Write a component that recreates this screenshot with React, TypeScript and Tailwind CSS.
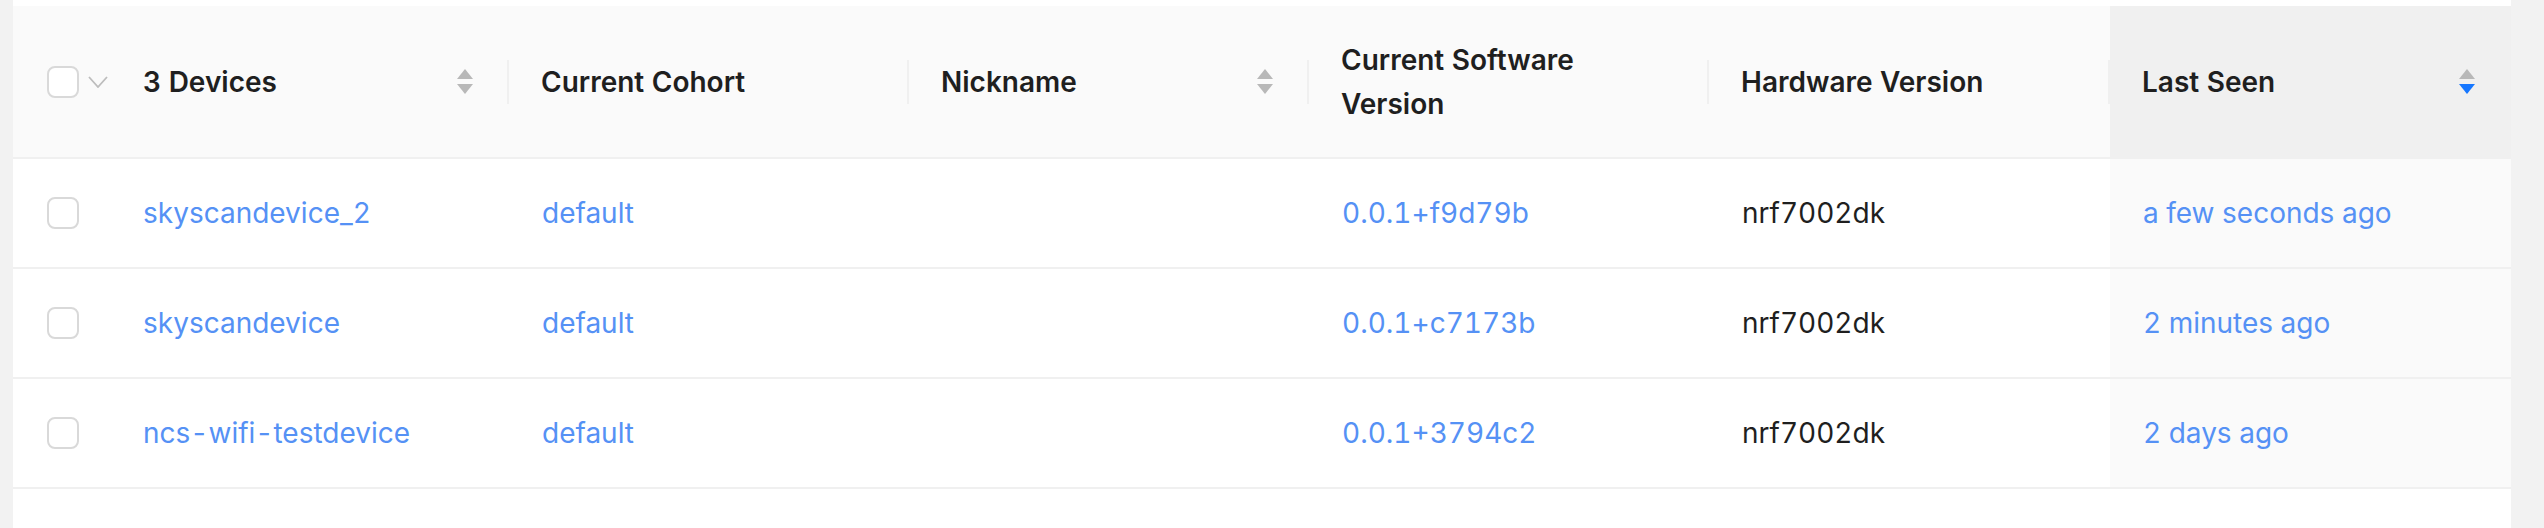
import React from "react";

type Device = {
  name: string;
  cohort: string;
  nickname: string;
  software: string;
  hardware: string;
  lastSeen: string;
};

const devices: Device[] = [
  {
    name: "skyscandevice_2",
    cohort: "default",
    nickname: "",
    software: "0.0.1+f9d79b",
    hardware: "nrf7002dk",
    lastSeen: "a few seconds ago",
  },
  {
    name: "skyscandevice",
    cohort: "default",
    nickname: "",
    software: "0.0.1+c7173b",
    hardware: "nrf7002dk",
    lastSeen: "2 minutes ago",
  },
  {
    name: "ncs-wifi-testdevice",
    cohort: "default",
    nickname: "",
    software: "0.0.1+3794c2",
    hardware: "nrf7002dk",
    lastSeen: "2 days ago",
  },
];

const cols = "grid grid-cols-[98px_398px_400px_400px_400px_401px_401px]";

const Checkbox = () => (
  <span className="block w-[32px] h-[32px] rounded-[8px] border-2 border-[#d9d9d9] bg-white" />
);

const Sorter = ({ active }: { active?: boolean }) => (
  <svg width="16" height="26" viewBox="0 0 16 26" className="shrink-0">
    <polygon points="8,0 16,10 0,10" fill="#b8b8b8" />
    <polygon points="0,15 16,15 8,25" fill={active ? "#1677ff" : "#b8b8b8"} />
  </svg>
);

const Divider = () => <span className="w-[2px] h-[44px] bg-[#f0f0f0] shrink-0" />;

const HeadCell = ({
  children,
  sorter,
  active,
  divider = true,
  sorted,
}: {
  children: React.ReactNode;
  sorter?: boolean;
  active?: boolean;
  divider?: boolean;
  sorted?: boolean;
}) => (
  <div className={`flex items-center pl-[32px] ${sorted ? "bg-[#f0f0f0]" : ""}`}>
    <div
      className={`flex-1 flex items-center justify-between ${divider ? "pr-[34px]" : "pr-[36px]"}`}
    >
      <span>{children}</span>
      {sorter && <Sorter active={active} />}
    </div>
    {divider && <Divider />}
  </div>
);

export default function App() {
  return (
    <div
      className="flex h-[528px] w-[2544px] bg-white text-[28px] leading-[44px] text-[#1f1f1f] tabular-nums"
      style={{ fontFamily: "Inter, 'Liberation Sans', sans-serif" }}
    >
      <div className="w-[13px] bg-[#f2f2f2]" />
      <div className="flex-1 pt-[6px]">
        {/* Header */}
        <div className={`${cols} h-[153px] bg-[#fafafa] border-b-2 border-[#f0f0f0] font-semibold`}>
          <div className="flex items-center pl-[34px] gap-[9px]">
            <Checkbox />
            <svg width="20" height="12" viewBox="0 0 20 12" fill="none">
              <polyline points="1,1 10,11 19,1" stroke="#bdbdbd" strokeWidth="1.8" />
            </svg>
          </div>
          <HeadCell sorter>3 Devices</HeadCell>
          <HeadCell>Current Cohort</HeadCell>
          <HeadCell sorter>Nickname</HeadCell>
          <HeadCell>
            Current Software
            <br />
            Version
          </HeadCell>
          <HeadCell>Hardware Version</HeadCell>
          <HeadCell sorter active sorted divider={false}>
            Last Seen
          </HeadCell>
        </div>

        {/* Rows */}
        {devices.map((d) => (
          <div key={d.name} className={`${cols} h-[110px] border-b-2 border-[#f0f0f0]`}>
            <div className="flex items-center pl-[34px]">
              <Checkbox />
            </div>
            <div className="flex items-center px-[32px] text-[#5591f5]">{d.name}</div>
            <div className="flex items-center px-[33px] text-[#5591f5]">{d.cohort}</div>
            <div className="flex items-center px-[33px]">{d.nickname}</div>
            <div className="flex items-center px-[33px] text-[#5591f5]">{d.software}</div>
            <div className="flex items-center px-[33px]">{d.hardware}</div>
            <div className="flex items-center px-[33px] bg-[#fafafa] text-[#5591f5]">{d.lastSeen}</div>
          </div>
        ))}
      </div>
      <div className="w-[33px] bg-[#f2f2f2]" />
    </div>
  );
}
